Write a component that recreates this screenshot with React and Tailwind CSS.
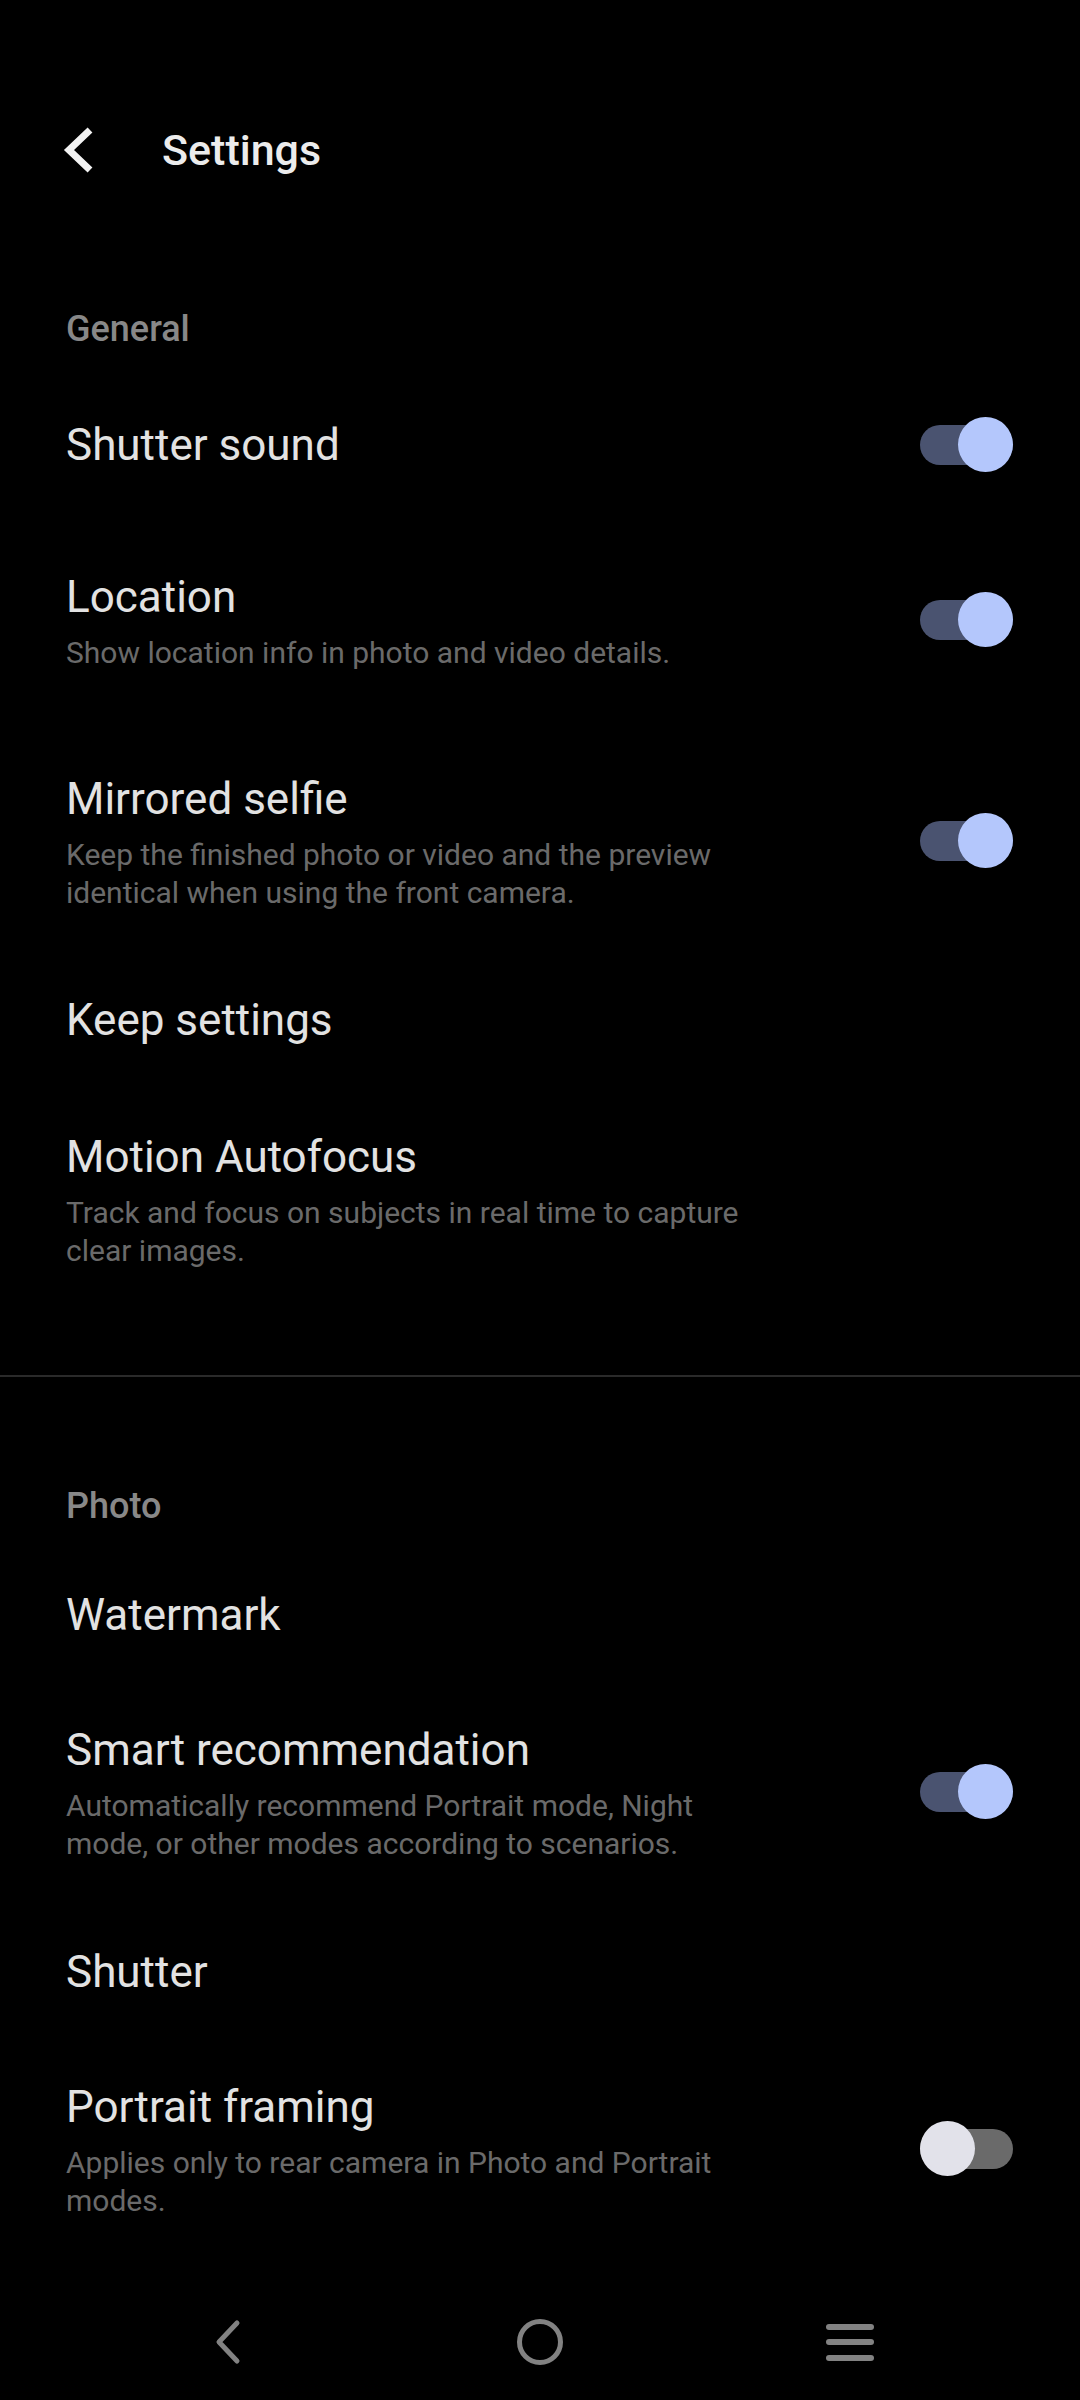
import React from "react";

function Toggle({ on, lift }) {
  return (
    <div className={"relative w-[93px] h-[55px] shrink-0 " + (lift ? "mb-[4px]" : "")}>
      <div
        className={
          "absolute left-0 right-0 top-[7.5px] h-[40px] rounded-full " +
          (on ? "bg-[#4a5370]" : "bg-[#6a6a6a]")
        }
      />
      <div
        className={
          "absolute top-0 w-[55px] h-[55px] rounded-full " +
          (on ? "right-0 bg-[#b4c7fc]" : "left-0 bg-[#e2e2ea]")
        }
      />
    </div>
  );
}

function Row({ title, sub, toggle, cls }) {
  return (
    <div className={"flex items-center justify-between pl-[66px] pr-[67px] " + cls}>
      <div className="flex flex-col">
        <div className="text-[44px] leading-[52px] text-[#e2e2e2]">{title}</div>
        {sub && (
          <div className="mt-[11px] text-[30px] leading-[38px] text-[#6a6a6a]">
            {sub.map((l, i) => (
              <div key={i}>{l}</div>
            ))}
          </div>
        )}
      </div>
      {toggle !== undefined && <Toggle on={toggle} lift={!!sub} />}
    </div>
  );
}

function SectionHeader({ children, cls }) {
  return (
    <div className={"pl-[66px] text-[36px] leading-[44px] font-medium text-[#888888] " + cls}>
      {children}
    </div>
  );
}

export default function App() {
  return (
    <div
      className="min-h-[2400px] w-[1080px] bg-black flex flex-col"
      style={{ fontFamily: "Roboto, 'Noto Sans', sans-serif" }}
    >
      {/* Header */}
      <div className="mt-[100px] h-[100px] flex items-center">
        <div className="ml-[60px] w-[36px] h-[50px] flex items-center">
          <svg width="36" height="50" viewBox="0 0 36 50">
            <polyline
              points="30,5 9,25 30,45"
              fill="none"
              stroke="#f2f2f2"
              strokeWidth="7"
              strokeLinejoin="miter"
              strokeLinecap="butt"
            />
          </svg>
        </div>
        <div className="ml-[66px] text-[43px] leading-[46px] font-medium text-[#ececec]">
          Settings
        </div>
      </div>

      <SectionHeader cls="pt-[107px] pb-[25px]">General</SectionHeader>
      <Row title="Shutter sound" toggle={true} cls="pt-[41px] pb-[58px]" />
      <Row
        title="Location"
        sub={["Show location info in photo and video details."]}
        toggle={true}
        cls="pt-[41px] pb-[60px]"
      />
      <Row
        title="Mirrored selfie"
        sub={[
          "Keep the finished photo or video and the preview",
          "identical when using the front camera.",
        ]}
        toggle={true}
        cls="pt-[41px] pb-[41px]"
      />
      <Row title="Keep settings" cls="pt-[41px] pb-[42px]" />
      <Row
        title="Motion Autofocus"
        sub={[
          "Track and focus on subjects in real time to capture",
          "clear images.",
        ]}
        cls="pt-[43px] pb-[42px]"
      />

      <div className="mt-[63px] h-[2px] bg-[#2a2a2a]" />

      <SectionHeader cls="pt-[107px] pb-[20px]">Photo</SectionHeader>
      <Row title="Watermark" cls="pt-[41px] pb-[41px]" />
      <Row
        title="Smart recommendation"
        sub={[
          "Automatically recommend Portrait mode, Night",
          "mode, or other modes according to scenarios.",
        ]}
        toggle={true}
        cls="pt-[42px] pb-[41px]"
      />
      <Row title="Shutter" cls="pt-[42px] pb-[41px]" />
      <Row
        title="Portrait framing"
        sub={[
          "Applies only to rear camera in Photo and Portrait",
          "modes.",
        ]}
        toggle={false}
        cls="pt-[42px] pb-[41px]"
      />

      {/* Nav bar */}
      <div className="mt-auto h-[116px] flex items-center pl-[197px]">
        <div className="w-[60px] h-[60px] flex items-center justify-center">
          <svg width="40" height="50" viewBox="0 0 40 50">
            <polyline
              points="30,6 12,25 30,44"
              fill="none"
              stroke="#828282"
              strokeWidth="5"
              strokeLinejoin="round"
              strokeLinecap="round"
            />
          </svg>
        </div>
        <div className="ml-[253px] w-[60px] h-[60px] flex items-center justify-center">
          <div className="w-[46px] h-[46px] rounded-full border-[5px] border-[#828282]" />
        </div>
        <div className="ml-[250px] w-[60px] h-[60px] flex flex-col items-center justify-center gap-[9.5px]">
          <div className="w-[48px] h-[6px] rounded-full bg-[#828282]" />
          <div className="w-[48px] h-[6px] rounded-full bg-[#828282]" />
          <div className="w-[48px] h-[6px] rounded-full bg-[#828282]" />
        </div>
      </div>
    </div>
  );
}
